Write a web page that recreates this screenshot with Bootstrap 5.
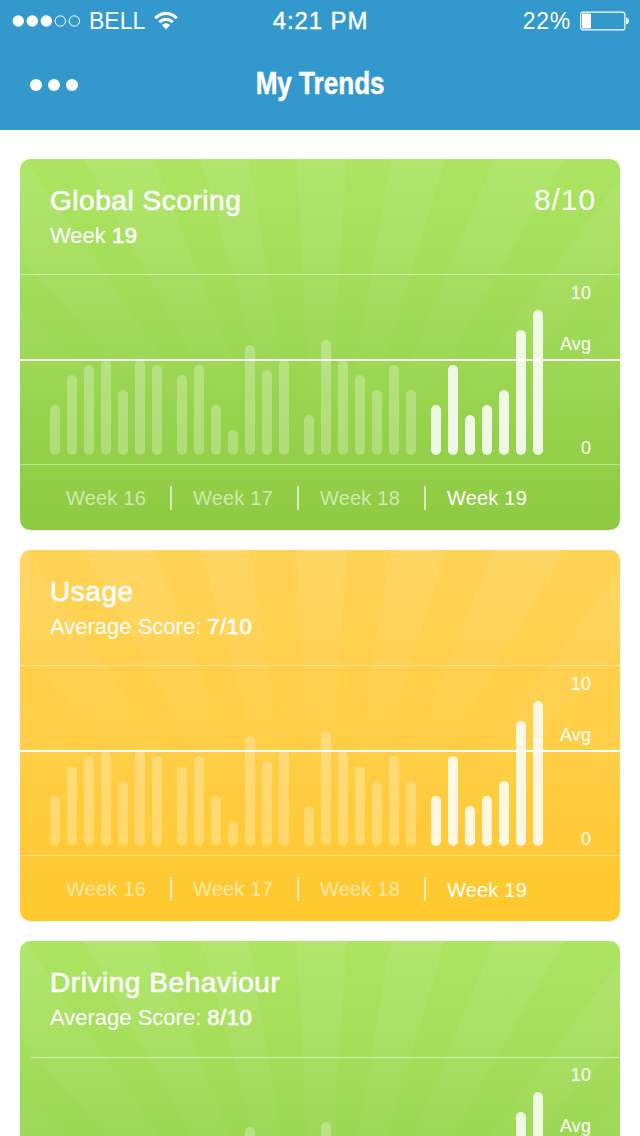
<!DOCTYPE html>
<html lang="en">
<head>
<meta charset="utf-8">
<meta name="viewport" content="width=device-width, initial-scale=1">
<title>My Trends</title>
<link rel="stylesheet" href="https://cdn.jsdelivr.net/npm/bootstrap@5.3.0/dist/css/bootstrap.min.css">
<style>
  body { font-family: "Liberation Sans", Arial, sans-serif; height: 1136px; overflow: hidden; background: #fff; color: #fff; }
  .app-header { background: #3398cc; height: 130px; }
  .status-bar { height: 41px; padding: 1px 11px 0 12px; line-height: 41px; font-size: 23px; }
  .status-side { flex: 1 1 0; }
  .status-time { font-size: 24px; letter-spacing: .9px; position: relative; top: -1px; -webkit-text-stroke: .4px #fff; }
  .carrier { margin-left: 7px; }
  .battery-text { letter-spacing: .7px; margin-right: 9px; }
  .title-bar { height: 88px; padding: 0 30px; }
  .title-balance { width: 49px; }
  .page-title { font-size: 32px; font-weight: 700; line-height: 1; position: relative; top: -1px; transform: scaleX(.815); -webkit-text-stroke: .5px #fff; }
  .card-stack { height: 1006px; overflow: hidden; padding: 29px 20px 0; gap: 20px; }
  .trend-card { height: 371px; border: 0; border-radius: 10px; overflow: hidden; color: #fff; flex: none; --bs-card-color: #fff; }
  .trend-green { background: linear-gradient(#abe562 0, #a3dd5a 115px, #9dd855 195px, #94cf49 300px, #8fca43 371px); }
  .trend-yellow { background: linear-gradient(#ffd358 0, #ffd04b 115px, #ffce45 195px, #ffca37 300px, #ffc82d 371px); }
  .rays { position: absolute; inset: 0; }
  .trend-head { flex: none; height: 116px; padding: 25px 24px 0 30px; border-bottom: 1px solid rgba(255,255,255,.45); }
  .trend-title { font-size: 28px; line-height: 34px; letter-spacing: .55px; margin: 0; font-weight: 400; -webkit-text-stroke: .6px #fff; }
  .trend-sub { font-size: 22px; line-height: 28px; margin-top: 4px; }
  .trend-sub b { font-weight: 400; letter-spacing: .5px; -webkit-text-stroke: .7px #fff; }
  .trend-score { font-size: 30px; line-height: 34px; letter-spacing: .9px; margin-top: -1px; }
  .chart { flex: none; height: 190px; padding: 0 29px 9px 30px; border-bottom: 1px solid rgba(255,255,255,.45); }
  .bars { gap: 15px; }
  .bar-week { gap: 7px; }
  .bar-day { width: 10px; border-radius: 5px; background: rgba(255,255,255,.27); }
  .is-current .bar-day { background: rgba(255,255,255,.84); }
  .avg-line { position: absolute; left: 0; right: 0; top: 84px; height: 2px; background: #fff; }
  .axis { font-size: 18px; line-height: 22px; padding-top: 7px; height: 184px; letter-spacing: .1px; }
  .axis-avg { margin-top: 29px; margin-bottom: auto; }
  .weeks { height: 65px; padding-left: 25px; font-size: 20px; letter-spacing: .2px; }
  .week-tab { width: 127px; padding-left: 21px; padding-top: 1px; color: rgba(255,255,255,.58); }
  .week-tab:not(:last-child)::after { content: ""; width: 2px; height: 24px; background: rgba(255,255,255,.65); margin: -1px 0 0 auto; }
  .week-tab:last-child { color: #fff; }
  .trend-yellow .week-tab:last-child { padding-top: 3px; }
  .trend-inset { height: 195px; border-radius: 10px 10px 0 0; }
  .trend-inset .trend-head { height: 117px; border-bottom: 0; background: linear-gradient(rgba(255,255,255,.5), rgba(255,255,255,.5)) 11px 116px / 589px 1px no-repeat; }
  .trend-inset .chart { height: 189px; }
  .trend-inset .axis { height: 183px; padding-top: 6px; }
  .trend-inset .avg-line { top: 83px; }
</style>
</head>
<body>
<header class="app-header">
  <div class="status-bar d-flex align-items-center">
    <div class="status-side d-flex align-items-center">
      <svg width="70" height="14" viewBox="0 0 70 14" fill="#fff">
        <circle cx="6.3" cy="7" r="5.7"/><circle cx="20.3" cy="7" r="5.7"/><circle cx="34.3" cy="7" r="5.7"/>
        <g fill="none" stroke="#fff"><circle cx="48.3" cy="7" r="5.2"/><circle cx="62.3" cy="7" r="5.2"/></g>
      </svg>
      <span class="carrier">BELL</span>
      <svg class="ms-2" width="26" height="20" viewBox="0 0 26 20" fill="none" stroke="#fff" stroke-width="3">
        <path d="M2.2 7.2Q13 -2.4 23.8 7.2"/><path d="M6.2 11.2Q13 5.2 19.8 11.2"/>
        <path d="M8.8 14.1Q13 10.5 17.2 14.1L13 18.6Z" fill="#fff" stroke="none"/>
      </svg>
    </div>
    <div class="status-time">4:21 PM</div>
    <div class="status-side d-flex align-items-center justify-content-end">
      <span class="battery-text">22%</span>
      <svg width="49" height="20" viewBox="0 0 49 20">
        <rect x=".6" y="1.1" width="44.3" height="17.8" rx="2.5" fill="none" stroke="#fff" stroke-width="1.2"/>
        <rect x="2" y="2.6" width="9" height="14.8" rx="1" fill="#fff"/>
        <path d="M46 6.5Q48.9 7 48.9 10T46 13.5Z" fill="#fff"/>
      </svg>
    </div>
  </div>
  <div class="title-bar d-flex align-items-center">
    <svg width="49" height="14" viewBox="0 0 49 14" fill="#fff"><circle cx="6" cy="7" r="6"/><circle cx="24" cy="7" r="6"/><circle cx="42" cy="7" r="6"/></svg>
    <div class="flex-fill text-center"><h1 class="page-title d-inline-block m-0">My Trends</h1></div>
    <div class="title-balance"></div>
  </div>
</header>

<svg width="0" height="0" class="position-absolute">
  <defs>
    <linearGradient id="fade" gradientUnits="userSpaceOnUse" x1="0" y1="0" x2="0" y2="250">
      <stop offset="0" stop-color="#fff" stop-opacity=".075"/><stop offset=".45" stop-color="#fff" stop-opacity=".05"/><stop offset="1" stop-color="#fff" stop-opacity="0"/>
    </linearGradient>
  </defs>
</svg>

<main class="card-stack d-flex flex-column" id="cards"></main>

<script src="https://cdn.jsdelivr.net/npm/bootstrap@5.3.0/dist/js/bootstrap.bundle.min.js"></script>
<script>
  const weeks = [
    [50, 80, 90, 95, 65, 95, 90],
    [80, 90, 50, 25, 110, 85, 95],
    [40, 115, 95, 80, 65, 90, 65],
    [50, 90, 40, 50, 65, 125, 145]
  ];
  const cards = [
    { title: 'Global Scoring', sub: 'Week <b>19</b>', score: '8/10', tone: 'trend-green', full: true },
    { title: 'Usage', sub: 'Average Score: <b>7/10</b>', score: '', tone: 'trend-yellow', full: true },
    { title: 'Driving Behaviour', sub: 'Average Score: <b>8/10</b>', score: '', tone: 'trend-green trend-inset', full: false }
  ];
  const rays = `<svg class="rays" width="600" height="371" viewBox="0 0 600 371">
    <g fill="url(#fade)">
      <path d="M0 0L5 0L298 425L0 98Z"/><path d="M0 150L298 425L0 230Z"/>
      <path d="M64 0L134 0L298 425Z"/><path d="M181 0L229 0L298 425Z"/>
      <path d="M277 0L327 0L298 425Z"/><path d="M371 0L425 0L298 425Z"/>
      <path d="M474 0L544 0L298 425Z"/><path d="M600 20L298 425L600 102Z"/><path d="M600 160L298 425L600 236Z"/>
    </g></svg>`;
  const bars = weeks.map((w, i) => `<div class="bar-week d-flex align-items-end${i === 3 ? ' is-current' : ''}">` +
    w.map(h => `<div class="bar-day" style="height:${h}px"></div>`).join('') + '</div>').join('');
  const tabs = [16, 17, 18, 19].map(n => `<div class="week-tab d-flex align-items-center"><span>Week ${n}</span></div>`).join('');
  document.getElementById('cards').innerHTML = cards.map(c => `
    <section class="card trend-card ${c.tone}">
      ${rays}
      <div class="trend-head position-relative d-flex justify-content-between">
        <div><h2 class="trend-title">${c.title}</h2><div class="trend-sub">${c.sub}</div></div>
        <div class="trend-score">${c.score}</div>
      </div>
      <div class="chart position-relative d-flex align-items-end justify-content-between">
        <div class="bars d-flex align-items-end">${bars}</div>
        <div class="axis d-flex flex-column text-end align-self-start">
          <span>10</span><span class="axis-avg">Avg</span>${c.full ? '<span>0</span>' : ''}
        </div>
        <div class="avg-line"></div>
      </div>
      ${c.full ? `<div class="weeks position-relative d-flex">${tabs}</div>` : ''}
    </section>`).join('');
</script>
</body>
</html>
